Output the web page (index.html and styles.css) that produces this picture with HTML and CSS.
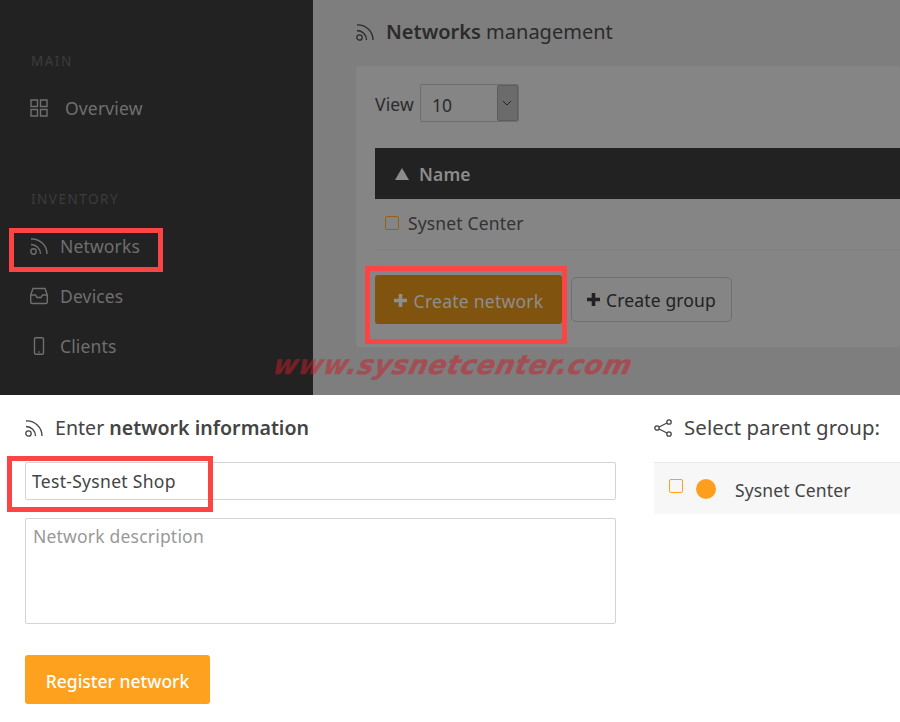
FILE: index.html
```html
<!DOCTYPE html>
<html lang="en">
<head>
<meta charset="utf-8">
<title>Networks management</title>
<link rel="stylesheet" href="styles.css">
</head>
<body>
<div class="page">
  <section class="top">
    <aside class="sidebar">
      <div class="side-label side-label-main">MAIN</div>
      <a class="side-link side-link-overview">
        <svg class="side-icon" viewBox="0 0 18 18"><path d="M1 1h6.500v6.500H1zM10.500 1H17v6.500h-6.500zM1 10.500h6.500V17H1zM10.500 10.500H17V17h-6.500z"/></svg>
        <span>Overview</span>
      </a>
      <div class="side-label side-label-inv">INVENTORY</div>
      <a class="side-link">
        <svg class="side-icon" viewBox="0 0 18 18"><circle cx="3.500" cy="14.500" r="2.700"/><path d="M1 7.500a9.500 9.500 0 0 1 9.500 9.500M1 2a15 15 0 0 1 16 15"/></svg>
        <span>Networks</span>
      </a>
      <a class="side-link">
        <svg class="side-icon" viewBox="0 0 18 18"><path d="M3 1.500h12l2.300 6.500v7a1.500 1.500 0 0 1-1.500 1.500H2.200A1.500 1.500 0 0 1 .7 15V8zM.7 8h4.800l1.500 2.500h4L12.500 8h4.800"/></svg>
        <span>Devices</span>
      </a>
      <a class="side-link">
        <svg class="side-icon" viewBox="0 0 18 18"><rect x="4.500" y=".7" width="9" height="16.600" rx="1.300"/><path d="M8.300 15h1.400"/></svg>
        <span>Clients</span>
      </a>
    </aside>
    <main class="content">
      <h1 class="heading heading-top">
        <svg class="head-icon" viewBox="0 0 18 18"><circle cx="3.500" cy="14.500" r="2.700"/><path d="M1 7.500a9.500 9.500 0 0 1 9.500 9.500M1 2a15 15 0 0 1 16 15"/></svg>
        <span><b>Networks</b> management</span>
      </h1>
      <div class="card">
        <div class="view-row">
          <span>View</span>
          <div class="select">
            <span class="select-value">10</span>
            <span class="select-arrow"><svg viewBox="0 0 10 6"><path d="M1 1l4 4 4-4"/></svg></span>
          </div>
        </div>
        <div class="table-head"><span class="sort"></span><span>Name</span></div>
        <div class="table-row"><span class="check check-dim"></span><span>Sysnet Center</span></div>
        <div class="actions">
          <button class="btn btn-create"><svg class="plus" viewBox="0 0 13 13"><path d="M6.500 0v13M0 6.500h13"/></svg><span>Create network</span></button>
          <button class="btn btn-group"><svg class="plus" viewBox="0 0 13 13"><path d="M6.500 0v13M0 6.500h13"/></svg><span>Create group</span></button>
        </div>
      </div>
    </main>
    <div class="mark mark-nav"></div>
    <div class="mark mark-create"></div>
    <div class="watermark">www.sysnetcenter.com</div>
  </section>
  <section class="bottom">
    <div class="form-col">
      <h2 class="heading heading-enter">
        <svg class="head-icon" viewBox="0 0 18 18"><circle cx="3.500" cy="14.500" r="2.700"/><path d="M1 7.500a9.500 9.500 0 0 1 9.500 9.500M1 2a15 15 0 0 1 16 15"/></svg>
        <span>Enter <b>network information</b></span>
      </h2>
      <div class="input-wrap">
        <input class="field" type="text" value="Test-Sysnet Shop">
        <div class="mark mark-input"></div>
      </div>
      <textarea class="field area" placeholder="Network description"></textarea>
      <button class="btn btn-register">Register network</button>
    </div>
    <div class="group-col">
      <h2 class="heading heading-select">
        <svg class="head-icon" viewBox="0 0 18 18"><circle cx="3" cy="9" r="2.200"/><circle cx="15" cy="3" r="2.200"/><circle cx="15" cy="15" r="2.200"/><path d="M5 8l8-4M5 10l8 4"/></svg>
        <span>Select parent group:</span>
      </h2>
      <div class="group-row">
        <span class="check check-raised"></span>
        <span class="dot"></span>
        <span class="group-name">Sysnet Center</span>
      </div>
    </div>
  </section>
</div>
</body>
</html>
```
FILE: styles.css
```css
* { box-sizing: border-box; }
html, body { margin: 0; padding: 0; background: #fff; }
body { font-family: "Noto Sans", "Open Sans", sans-serif; color: #444; overflow: hidden; }
.page { width: 900px; height: 722px; overflow: hidden; display: flex; flex-direction: column; }

.top { position: relative; height: 395px; display: flex; overflow: hidden; flex: none; }
.sidebar { width: 313px; flex: none; background: #222; padding: 53px 0 0 31px; display: flex; flex-direction: column; }
.side-label { font-size: 13.500px; line-height: 16px; letter-spacing: 1.500px; color: #3c3c3c; }
.side-label-inv { margin-top: 58px; margin-bottom: 14px; }
.side-link { height: 50px; display: flex; align-items: center; gap: 12px; font-size: 17.500px; letter-spacing: .15px; color: #6f6f6f; margin-left: -1px; }
.side-link-overview { margin-top: 14px; gap: 17px; }
.side-icon { width: 18px; height: 18px; fill: none; stroke: #6f6f6f; stroke-width: 1.400; flex: none; }

.content { flex: 1; min-width: 0; background: #7e7e7e; padding: 18px 0 0 43px; }
.heading { margin: 0; height: 28px; display: flex; align-items: center; gap: 12px; font-size: 20px; font-weight: 400; color: #444; }
.heading span { margin-top: -2px; }
.heading b { font-weight: 600; }
.head-icon { width: 18px; height: 18px; fill: none; stroke: currentColor; stroke-width: 1.300; flex: none; }
.heading-top { color: #2b2b2b; }
.heading-enter { font-size: 19.600px; }
.heading-select { font-size: 20.400px; letter-spacing: .1px; }
.card { margin-top: 20px; height: 281px; background: #858585; border-radius: 3px; padding: 18px 0 0 19px; color: #2b2b2b; font-size: 17.500px; letter-spacing: .15px; }
.view-row { display: flex; align-items: center; gap: 6px; height: 38px; padding-top: 2px; }
.select { width: 99px; height: 38px; margin-top: -2px; border: 1px solid #6d6d6d; border-radius: 2px; display: flex; align-items: stretch; }
.select-value { flex: 1; padding: 9px 0 0 11px; line-height: 22px; }
.select-arrow { width: 21px; background: #6b6b6b; border: 1px solid #5c5c5c; display: flex; align-items: center; justify-content: center; border-radius: 2px; }
.select-arrow svg { width: 10px; height: 6px; fill: none; stroke: #222; stroke-width: 1; }
.table-head { margin-top: 26px; height: 51px; background: #222; color: #8c8c8c; display: flex; align-items: center; gap: 10px; padding-left: 20px; font-weight: 600; }
.sort { width: 0; height: 0; border-left: 7px solid transparent; border-right: 7px solid transparent; border-bottom: 12px solid #8c8c8c; }
.table-row { height: 51px; display: flex; align-items: center; gap: 9px; padding: 0 0 2px 10px; border-bottom: 1px solid #7f7f7f; color: #333; }
.check { width: 14px; height: 14px; border: 1px solid #fda11e; border-radius: 2px; flex: none; }
.check-dim { border-color: #9a5f14; }
.check-raised { margin-bottom: 5px; }
.actions { display: flex; align-items: center; gap: 9px; height: 49px; margin-top: 25px; }
.btn { font: inherit; border-radius: 3px; cursor: pointer; display: flex; align-items: center; justify-content: center; gap: 6px; padding: 1px 0 0; letter-spacing: .15px; }
.plus { width: 13px; height: 13px; fill: none; stroke: currentColor; stroke-width: 3.600; flex: none; }
.btn-create { width: 187px; height: 49px; background: #80540f; border: 0; color: #8e8e8e; font-size: 17.500px; padding: 2px 0 0 0; gap: 7px; letter-spacing: .25px; }
.btn-group { width: 161px; height: 45px; background: transparent; border: 1px solid #6f6f6f; color: #222; font-size: 17.500px; border-radius: 5px; padding-top: 0; }

.mark { position: absolute; border: 5px solid #fb4545; }
.mark-nav { left: 9px; top: 228px; width: 154px; height: 44px; }
.mark-create { left: 365px; top: 266px; width: 202px; height: 78px; }
.watermark { position: absolute; left: 274px; top: 346px; font-family: "DejaVu Sans", sans-serif; font-weight: 700; font-style: italic; font-size: 26.500px; line-height: 38px; letter-spacing: .7px; color: #c8202c; -webkit-text-stroke: .4px #c8202c; white-space: nowrap; opacity: .5; transform: skewX(-14deg); }

.bottom { flex: 1; display: flex; padding: 19px 0 0 25px; gap: 38px; background: #fff; }
.form-col { width: 591px; flex: none; display: flex; flex-direction: column; }
.input-wrap { position: relative; margin-top: 20px; }
.mark-input { left: -18px; top: -6px; width: 206px; height: 56px; }
.field { display: block; width: 100%; height: 38px; border: 1px solid #d4d4d4; border-radius: 2px; padding: 0 7px 0 6px; font: inherit; font-size: 17.500px; letter-spacing: .3px; color: #444; background: #fff; outline: 0; }
.area { height: 106px; margin-top: 18px; padding: 5px 7px; resize: none; letter-spacing: .2px; }
.area::placeholder { color: #999; opacity: 1; }
.btn-register { margin-top: 31px; width: 185px; height: 49px; background: #fda11e; border: 0; color: #fff; font-size: 17.500px; font-weight: 500; padding-top: 3px; letter-spacing: 0; }
.group-col { flex: 1; min-width: 0; }
.group-row { margin-top: 20px; height: 52px; background: #f7f7f7; border-top: 1px solid #e8e8e8; display: flex; align-items: center; padding-left: 15px; color: #444; font-size: 17.500px; letter-spacing: .15px; }
.dot { width: 20px; height: 20px; border-radius: 50%; background: #fd9f1c; margin-left: 13px; }
.group-name { margin-left: 19px; padding-top: 2px; }
```
